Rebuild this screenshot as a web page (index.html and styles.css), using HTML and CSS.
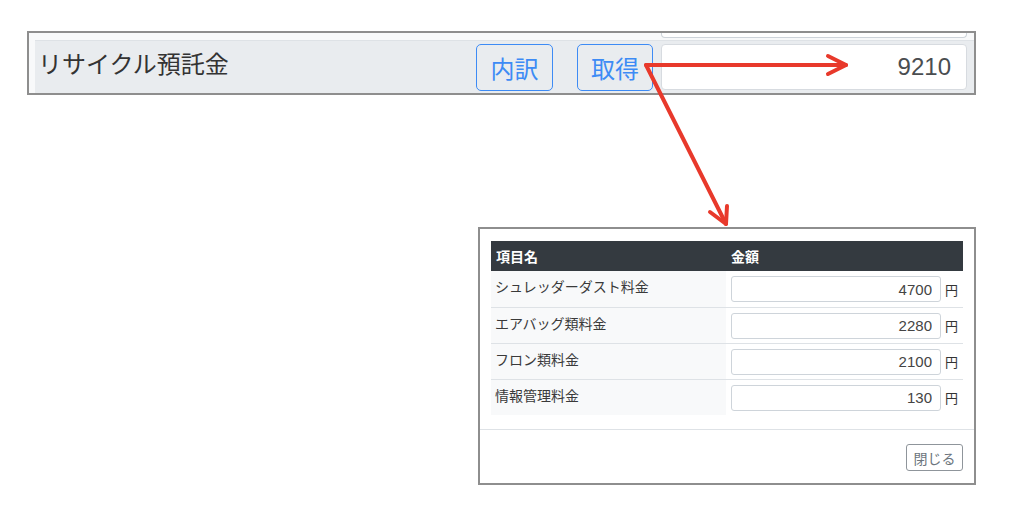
FILE: index.html
```html
<!DOCTYPE html>
<html lang="ja">

<head>
    <meta charset="UTF-8">
    <meta name="viewport" content="width=device-width, initial-scale=1.0">
    <title>リサイクル預託金</title>
    <link rel="stylesheet" href="styles.css">
</head>

<body>
    <div class="panel">
        <div class="prev">
            <div class="prev-input"></div>
        </div>
        <div class="row">
            <div class="row-label">リサイクル預託金</div>
            <button class="btn-outline">内訳</button>
            <button class="btn-outline get-btn">取得</button>
            <input type="text" class="total-amt" value="9210" readonly>
        </div>
    </div>

    <div class="dialog">
        <div class="dialog-body">
            <table class="detail">
                <thead>
                    <tr>
                        <th>項目名</th>
                        <th>金額</th>
                    </tr>
                </thead>
                <tbody>
                    <tr>
                        <td class="name">シュレッダーダスト料金</td>
                        <td><div class="amount"><input type="text" value="4700" readonly><span>円</span></div></td>
                    </tr>
                    <tr>
                        <td class="name">エアバッグ類料金</td>
                        <td><div class="amount"><input type="text" value="2280" readonly><span>円</span></div></td>
                    </tr>
                    <tr>
                        <td class="name">フロン類料金</td>
                        <td><div class="amount"><input type="text" value="2100" readonly><span>円</span></div></td>
                    </tr>
                    <tr>
                        <td class="name">情報管理料金</td>
                        <td><div class="amount"><input type="text" value="130" readonly><span>円</span></div></td>
                    </tr>
                </tbody>
            </table>
        </div>
        <div class="dialog-footer">
            <button class="close-btn">閉じる</button>
        </div>
    </div>

    <!-- annotation arrows -->
    <svg class="arrows" width="1024" height="514" viewBox="0 0 1024 514">
        <g fill="none" stroke="#e8392b" stroke-width="4" stroke-linecap="round" stroke-linejoin="round">
            <path d="M646 65 L846 65" />
            <path d="M828 56 L846 65 L828 74" />
            <path d="M646 65 L726 224" />
            <path d="M710 212 L726 224 L727 206" />
        </g>
    </svg>
</body>

</html>
```

FILE: styles.css
```css
* {
    margin: 0;
    padding: 0;
    box-sizing: border-box;
}

body {
    background-color: #fff;
    width: 1024px;
    height: 514px;
    overflow: hidden;
    position: relative;
    font-family: "Noto Sans CJK JP", "Liberation Sans", sans-serif;
    color: #212529;
}

.panel {
    margin: 31px 0 0 27px;
    width: 949px;
    height: 64px;
    border: 2px solid #8e8e8e;
    background-color: #f8f9fa;
    display: flex;
    flex-direction: column;
}

.prev {
    height: 7px;
    display: flex;
    justify-content: flex-end;
    padding-right: 7px;
}

.prev-input {
    width: 306px;
    height: 5px;
    background-color: #fff;
    border: 1px solid #ced4da;
    border-top: none;
    border-radius: 0 0 4px 4px;
}

.row {
    flex: 1;
    margin-left: 6px;
    border-top: 1px solid #dee2e6;
    background-color: #e9ecef;
    display: flex;
    align-items: center;
    padding-right: 7px;
}

.row-label {
    flex: 1;
    align-self: flex-start;
    padding: 4px 0 0 3px;
    font-size: 24px;
    color: #333;
}

.btn-outline {
    height: 47px;
    width: 77px;
    border: 1px solid #3d8bf5;
    border-radius: 5px;
    background: transparent;
    color: #3d8bf5;
    font-family: "Noto Sans CJK JP", sans-serif;
    font-size: 24px;
}

.get-btn {
    margin: 0 8px 0 24px;
    width: 76px;
}

.total-amt {
    width: 306px;
    height: 46px;
    border: 1px solid #d7dbe0;
    border-radius: 4px;
    background-color: #fff;
    text-align: right;
    padding-right: 15px;
    font-family: "Liberation Sans", sans-serif;
    font-size: 24px;
    color: #4a4d50;
}

.dialog {
    margin: 132px 0 0 478px;
    width: 498px;
    height: 258px;
    border: 2px solid #8e8e8e;
    background-color: #fff;
}

.dialog-body {
    padding: 12px 11px 14px;
}

.detail {
    width: 472px;
    border-collapse: collapse;
    font-size: 14px;
}

.detail th {
    background-color: #343a40;
    color: #fff;
    text-align: left;
    font-weight: 700;
    height: 30px;
    padding: 0 5px;
    width: 50%;
}

.detail td {
    border-top: 1px solid #dee2e6;
    vertical-align: top;
    height: 36px;
}

.detail tbody tr:first-child td {
    border-top: none;
}

.detail .name {
    background-color: #f8f9fa;
    padding: 5px 4px 0;
    color: #3a3a3a;
}

.amount {
    display: flex;
    align-items: center;
    padding: 5px 5px 0;
}

.amount input {
    width: 210px;
    height: 26px;
    border: 1px solid #ced4da;
    border-radius: 3px;
    text-align: right;
    padding-right: 8px;
    font-family: "Liberation Sans", sans-serif;
    font-size: 15px;
    color: #444;
}

.amount span {
    margin-left: 4px;
    font-size: 13px;
    color: #333;
}

.dialog-footer {
    border-top: 1px solid #dee2e6;
    padding: 14px 11px 0;
    text-align: right;
}

.close-btn {
    height: 27px;
    width: 57px;
    border: 1px solid #8f959b;
    border-radius: 3px;
    background: #fff;
    color: #6c757d;
    font-family: "Noto Sans CJK JP", sans-serif;
    font-size: 14px;
}

.arrows {
    position: absolute;
    top: 0;
    left: 0;
    pointer-events: none;
}
```
